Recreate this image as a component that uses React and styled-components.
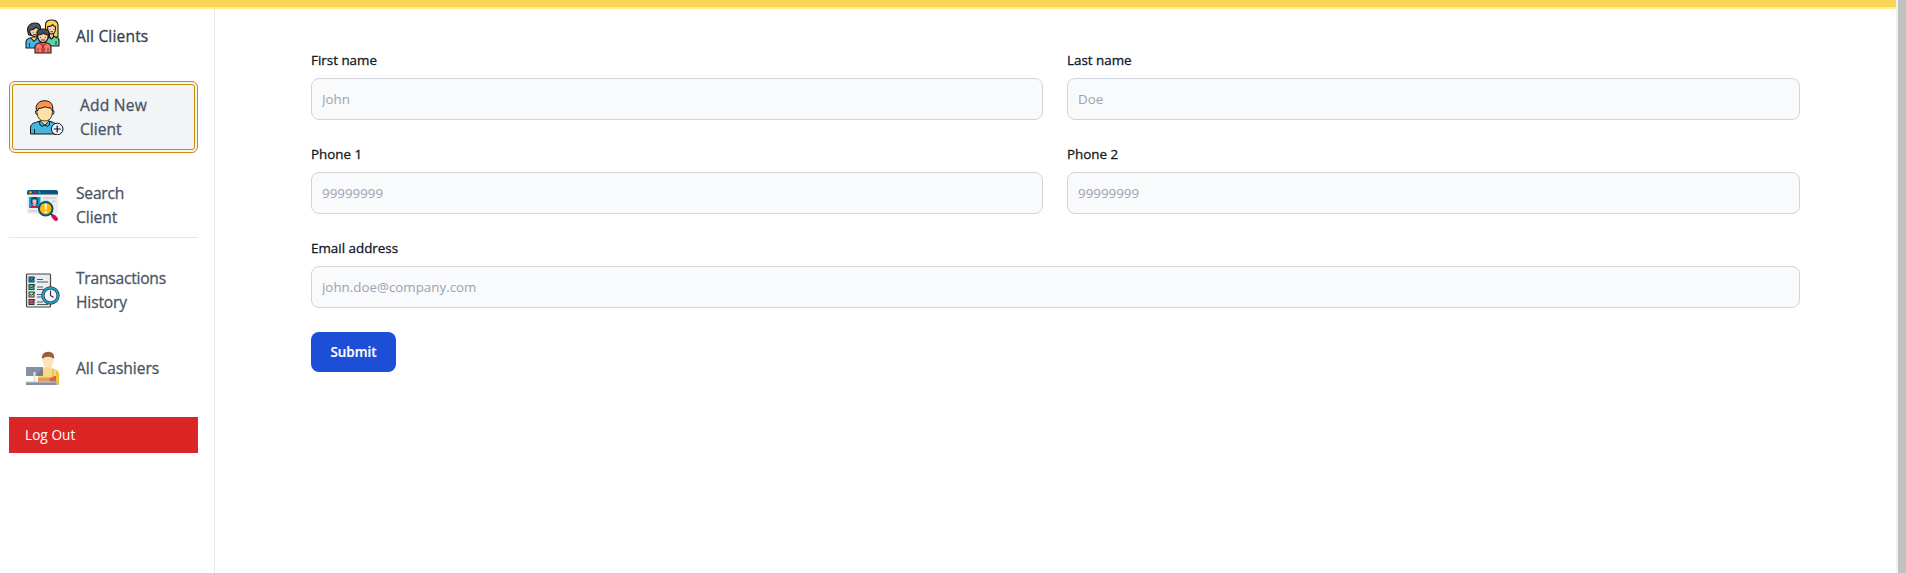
import React from 'react';
import styled, { createGlobalStyle, css } from 'styled-components';

const GlobalStyle = createGlobalStyle`
  *, *::before, *::after { box-sizing: border-box; }
  body {
    margin: 0;
    background: #fff;
    font-family: "Segoe UI", "Open Sans", "Noto Sans", sans-serif;
    overflow: hidden;
  }
`;

const Window = styled.div`
  display: flex;
  height: 100vh;
`;

const Page = styled.div`
  flex: 1;
  min-width: 0;
  display: flex;
  flex-direction: column;
`;

const ScrollTrack = styled.div`
  width: 10px;
  padding-left: 2px;
  background: #f1f1f1;
`;

const ScrollThumb = styled.div`
  height: 100%;
  background: #c1c1c1;
`;

const TopBar = styled.header`
  flex: none;
  height: 9px;
  background: #fad454;
  border-bottom: 2px solid #fef08a;
`;

const Body = styled.div`
  flex: 1;
  display: flex;
`;

const Sidebar = styled.aside`
  flex: none;
  width: 215px;
  padding: 0 16px 0 9px;
  border-right: 1px solid #e5e7eb;
`;

const NavItem = styled.a`
  display: flex;
  align-items: center;
  gap: 16px;
  height: ${(p) => p.$height}px;
  margin-top: ${(p) => p.$gap || 0}px;
  padding: 0 16px;
  color: #4b5563;
  font-size: 15.6px;
  font-weight: 500;
  line-height: 24px;
  -webkit-text-stroke: 0.3px currentColor;
  ${(p) => p.$dark && css`color: #374151;`}
  ${(p) => p.$divided && css`border-bottom: 1px solid #e5e7eb;`}
  ${(p) => p.$active && css`
    background: #f3f4f6;
    border: 4px double #ca8a04;
    border-radius: 6px;
  `}
`;

const NavLine = styled.span`
  display: block;
  white-space: nowrap;
  letter-spacing: ${(p) => p.$tracking}px;
`;

const Icon = styled.svg`
  flex: none;
  width: 35px;
  height: 35px;
`;

const LogOut = styled.button`
  display: block;
  width: 100%;
  height: 36px;
  margin-top: 22px;
  padding: 0 16px;
  border: 0;
  background: #dc2626;
  color: #fff;
  font: 400 13.6px/20px "Segoe UI", "Open Sans", sans-serif;
  letter-spacing: 0.05px;
  text-align: left;
`;

const Main = styled.main`
  flex: 1;
  padding: 41px 96px 0;
`;

const Form = styled.form`
  display: grid;
  grid-template-columns: 732px 1fr;
  gap: 24px;
`;

const Field = styled.label`
  display: flex;
  flex-direction: column;
  gap: 8px;
  grid-column: ${(p) => (p.$wide ? '1 / -1' : 'auto')};
  color: #111827;
  font-size: 13.4px;
  font-weight: 500;
  line-height: 20px;
  -webkit-text-stroke: 0.3px currentColor;
`;

const Input = styled.input`
  width: 100%;
  height: 42px;
  padding: 0 10px;
  border: 1px solid #d1d5db;
  border-radius: 8px;
  background: #f9fafb;
  font: 400 13.35px/20px "Segoe UI", "Open Sans", sans-serif;
  outline: none;
  -webkit-text-stroke: 0;
  &::placeholder { color: #9ca3af; opacity: 1; }
`;

const Submit = styled.button`
  justify-self: start;
  width: 85px;
  height: 40px;
  padding: 0;
  border: 0;
  border-radius: 8px;
  background: #1d4ed8;
  color: #fff;
  font: 600 13.4px/20px "Segoe UI", "Open Sans", sans-serif;
  -webkit-text-stroke: 0.2px currentColor;
`;

const ClientsIcon = () => (
  <Icon viewBox="0 0 35 35" stroke="#1b1b1b" strokeWidth="1.1" strokeLinejoin="round">
    <path d="M20.5 18V6Q20.5 1 26.5 1T33 6V18Z" fill="#fdd44b" />
    <path d="M19.5 27v-6q0-2 3-3l4-1 4 1q3.5 1 3.5 3v6Z" fill="#5bd3a8" />
    <path d="M24.5 14v4l2 2 2-2v-4Z" fill="#f9c9a4" />
    <path d="M22.7 7.5q4 0 5-2 1 2 2.7 2V11q-.7 4-3.8 4t-3.9-4Z" fill="#fbd4b0" />
    <path d="M1 29v-6q0-3 4-4l4-1 5 1q3 1 3 4v6Z" fill="#46b5e5" />
    <path d="m5.500 18.500 3.500 4 3.500-4" fill="#fdd44b" />
    <path d="M3.800 16q-2-5-.7-8 2-4 7-4 5 0 5.500 5v6l-2 2Z" fill="#4d5967" />
    <path d="M4.700 11q5-.5 6.400-3 1.500 2 3 2v3q-1 4.500-4.600 4.500T4.700 13Z" fill="#f9c9a4" />
    <path d="M10 34v-6q0-3 4-4l4-1 4 1q4 1 4 4v6Z" fill="#fb7468" />
    <path d="m14 24 4 3 4-3M18 27l-1.500 3.500L18 34l1.500-3.500ZM13 29v5M23 29v5" fill="#e2473f" stroke="#7d2a28" strokeWidth=".8" />
    <path d="M12 19v-5q0-4 6-4t6 4v5Z" fill="#434c58" />
    <path d="M12.800 16q4 0 5.500-2 2 2 4.800 2v2.500q-1.200 5-5.100 5t-5.200-5Z" fill="#fbcda8" />
    <path d="M15.500 18v.8M20.500 18v.8M16 21h4M8 13v.6M12 13v.6M25 10v.6M28.500 10v.6M8 15.600h3M25.500 12.700h2.500M4.500 24v4M31 22v4" strokeWidth=".8" fill="none" />
  </Icon>
);

const AddClientIcon = () => (
  <Icon viewBox="0 0 35 35" stroke="#151515" strokeWidth="1" strokeLinejoin="round">
    <path d="M1.500 34v-6q0-4.500 5-5.500l6-2h6l6 2q4 1 4 5.500v6Z" fill="#4ab5dc" />
    <path d="M12.200 18v4l3.500 3.500 3.500-3.500v-4Z" fill="#fee0a5" stroke="none" />
    <path d="m11.500 21 4.200 4.200 4.200-4.200M10.500 21.500l.5 3.500 2 1.300 2.700-1.300 2.700 1.300 2-1.300.4-3.500M5.500 29v5" fill="none" />
    <path d="M7.500 10.500q-1.300 0-1 2 .3 2 1.700 2M24 10.500q1.300 0 1 2-.3 2-1.700 2" fill="#fee0a5" />
    <path d="M7.800 8q8-1 10-3l5.600 4v4q-1 8-7.700 8T8 13Z" fill="#fee0a5" strokeWidth=".8" />
    <path d="M7.500 10.500Q6 6 8.500 4 10 .7 15 .7q7 0 8.500 5 .7 2.500 0 5.500-.5-2.500-2-3.200-3.500-.3-5.500-1.200-3 1.500-6.500 1.700-.5 1-.5 2Z" fill="#ff914d" />
    <circle cx="28.200" cy="29" r="5.800" fill="#eaf4ff" />
    <path d="M28.200 25.500v7M24.700 29h7" fill="none" strokeWidth="1.200" />
  </Icon>
);

const SearchClientIcon = () => (
  <Icon viewBox="0 0 35 35">
    <rect x="2" y="3" width="31" height="23" rx="2" fill="#ededed" />
    <path d="M2 6.500V4q0-2 2-2h27q2 0 2 2v2.500Z" fill="#0b557d" />
    <path d="m5.500 2.700 1.500 1.500-1.500 1.500L4 4.200Z" fill="#ffb800" />
    <path d="m10 2.700 1.500 1.500-1.500 1.500-1.500-1.500Z" fill="#d4145a" />
    <path d="m14.500 2.700 1.500 1.500-1.500 1.500-1.500-1.500Z" fill="#00a9d4" />
    <rect x="4" y="9" width="11.500" height="11" fill="#05a5cf" />
    <path d="M6 16V12q0-3 3.500-3t3.500 3v4Z" fill="#09466b" />
    <path d="M5 20q0-3 4.500-3t4.500 3Z" fill="#d3135a" />
    <path d="M7.500 11.500h4V15L10.500 16v2h-2v-2l-1-1Z" fill="#ffb99f" />
    <path d="M18 10h12.500M18 13h5M27 13.500h3.500M4 23h8" stroke="#cbced0" strokeWidth="1.300" />
    <path d="m25 25 3 3" stroke="#093f64" strokeWidth="2" />
    <path d="m28.500 28.500 2.500 2.500" stroke="#d20c55" strokeWidth="4" strokeLinecap="round" />
    <circle cx="20.700" cy="20.700" r="6.800" fill="#ffb900" stroke="#0b527d" strokeWidth="2" />
    <path d="M20.700 16v5.500M20.700 23v2" stroke="#fff7d3" strokeWidth="2.200" />
  </Icon>
);

const HistoryIcon = () => (
  <Icon viewBox="0 0 35 35">
    <rect x="1.500" y="1" width="24" height="33" rx="1" fill="#e9edf1" stroke="#444" strokeWidth="1.200" />
    {[
      [4, '#258fb2'],
      [11.5, '#43c991'],
      [19, '#eecb59'],
      [26.5, '#e65262'],
    ].map(([y, fill]) => (
      <g key={y} stroke="#26383d" strokeWidth="1" fill="none">
        <rect x="4" y={y} width="5" height="5" fill={fill} />
        <path d={`m5 ${y + 2} 1.500 1.500 3.500-3.500`} />
        <path d={`M12 ${y + 2.500}h6M12 ${y + 5}h11`} strokeWidth=".8" />
      </g>
    ))}
    <circle cx="25.500" cy="22.500" r="7.600" fill="#f4f7fa" stroke="#263d49" strokeWidth="3.200" />
    <circle cx="25.500" cy="22.500" r="7.600" fill="none" stroke="#25a0c6" strokeWidth="1.800" />
    <path d="M25.500 17.500v5l3 2" fill="none" stroke="#26363e" strokeWidth="1.100" />
  </Icon>
);

const CashierIcon = () => (
  <Icon viewBox="0 0 35 35">
    <path d="M13 31V20q0-1.500 3-2l4-1h6l4 1q4 1 4 5v11h-4v-3Z" fill="#f8d982" />
    <path d="M31 20q3 0 3 4v10h-3.500Z" fill="#f3bf40" />
    <path d="M19.500 13h7v5q-3.500 3-7 0Z" fill="#f7d4a4" />
    <path d="M17.500 7Q17.500 2 23 2t5.500 5v3.500q-1.500 6-5.500 6t-5.500-6Z" fill="#ffe2b8" />
    <path d="M16.800 7Q16.800 1 23 .7T29.200 7l-1.200.8q-1-2-5-2t-5 2Z" fill="#95613e" />
    <path d="M13 26.500h16v5H13Z" fill="#e79a50" />
    <path d="m24 28 5-3h2v6h-5Z" fill="#c96d40" />
    <path d="M28 18v8" stroke="#efb849" strokeWidth="1.500" />
    <path d="M1 16h17v9H1Z" fill="#8790a0" />
    <path d="m18 16-7 9h7Z" fill="#737e8f" />
    <path d="M8.500 21h2v10h-2Z" fill="#e8e3df" />
    <path d="M1 30.500h30.500v3.500H1Z" fill="#c8ccd2" />
    <path d="M1 31.500h30.500V34H1Z" fill="#858e9f" />
  </Icon>
);

const navItems = [
  { lines: [['All Clients', 0.15]], icon: ClientsIcon, height: 54, dark: true },
  { lines: [['Add New', 0.2], ['Client', 0]], icon: AddClientIcon, height: 72, gap: 18, active: true },
  { lines: [['Search', -0.2], ['Client', -0.05]], icon: SearchClientIcon, height: 65, gap: 20, divided: true },
  { lines: [['Transactions', -0.23], ['History', -0.15]], icon: HistoryIcon, height: 72, gap: 16 },
  { lines: [['All Cashiers', -0.05]], icon: CashierIcon, height: 54, gap: 15 },
];

const fields = [
  { label: 'First name', placeholder: 'John' },
  { label: 'Last name', placeholder: 'Doe' },
  { label: 'Phone 1', placeholder: '99999999' },
  { label: 'Phone 2', placeholder: '99999999' },
  { label: 'Email address', placeholder: 'john.doe@company.com', wide: true },
];

export default function App() {
  return (
    <>
      <GlobalStyle />
      <Window>
        <Page>
          <TopBar />
          <Body>
            <Sidebar>
              {navItems.map(({ lines, icon: Glyph, height, gap, active, divided, dark }) => (
                <NavItem
                  key={lines[0][0]}
                  $height={height}
                  $gap={gap}
                  $active={active}
                  $divided={divided}
                  $dark={dark}
                >
                  <Glyph />
                  <div>
                    {lines.map(([text, tracking]) => (
                      <NavLine key={text} $tracking={tracking}>{text}</NavLine>
                    ))}
                  </div>
                </NavItem>
              ))}
              <LogOut>Log Out</LogOut>
            </Sidebar>
            <Main>
              <Form>
                {fields.map(({ label, placeholder, wide }) => (
                  <Field key={label} $wide={wide}>
                    {label}
                    <Input placeholder={placeholder} />
                  </Field>
                ))}
                <Submit type="button">Submit</Submit>
              </Form>
            </Main>
          </Body>
        </Page>
        <ScrollTrack>
          <ScrollThumb />
        </ScrollTrack>
      </Window>
    </>
  );
}
